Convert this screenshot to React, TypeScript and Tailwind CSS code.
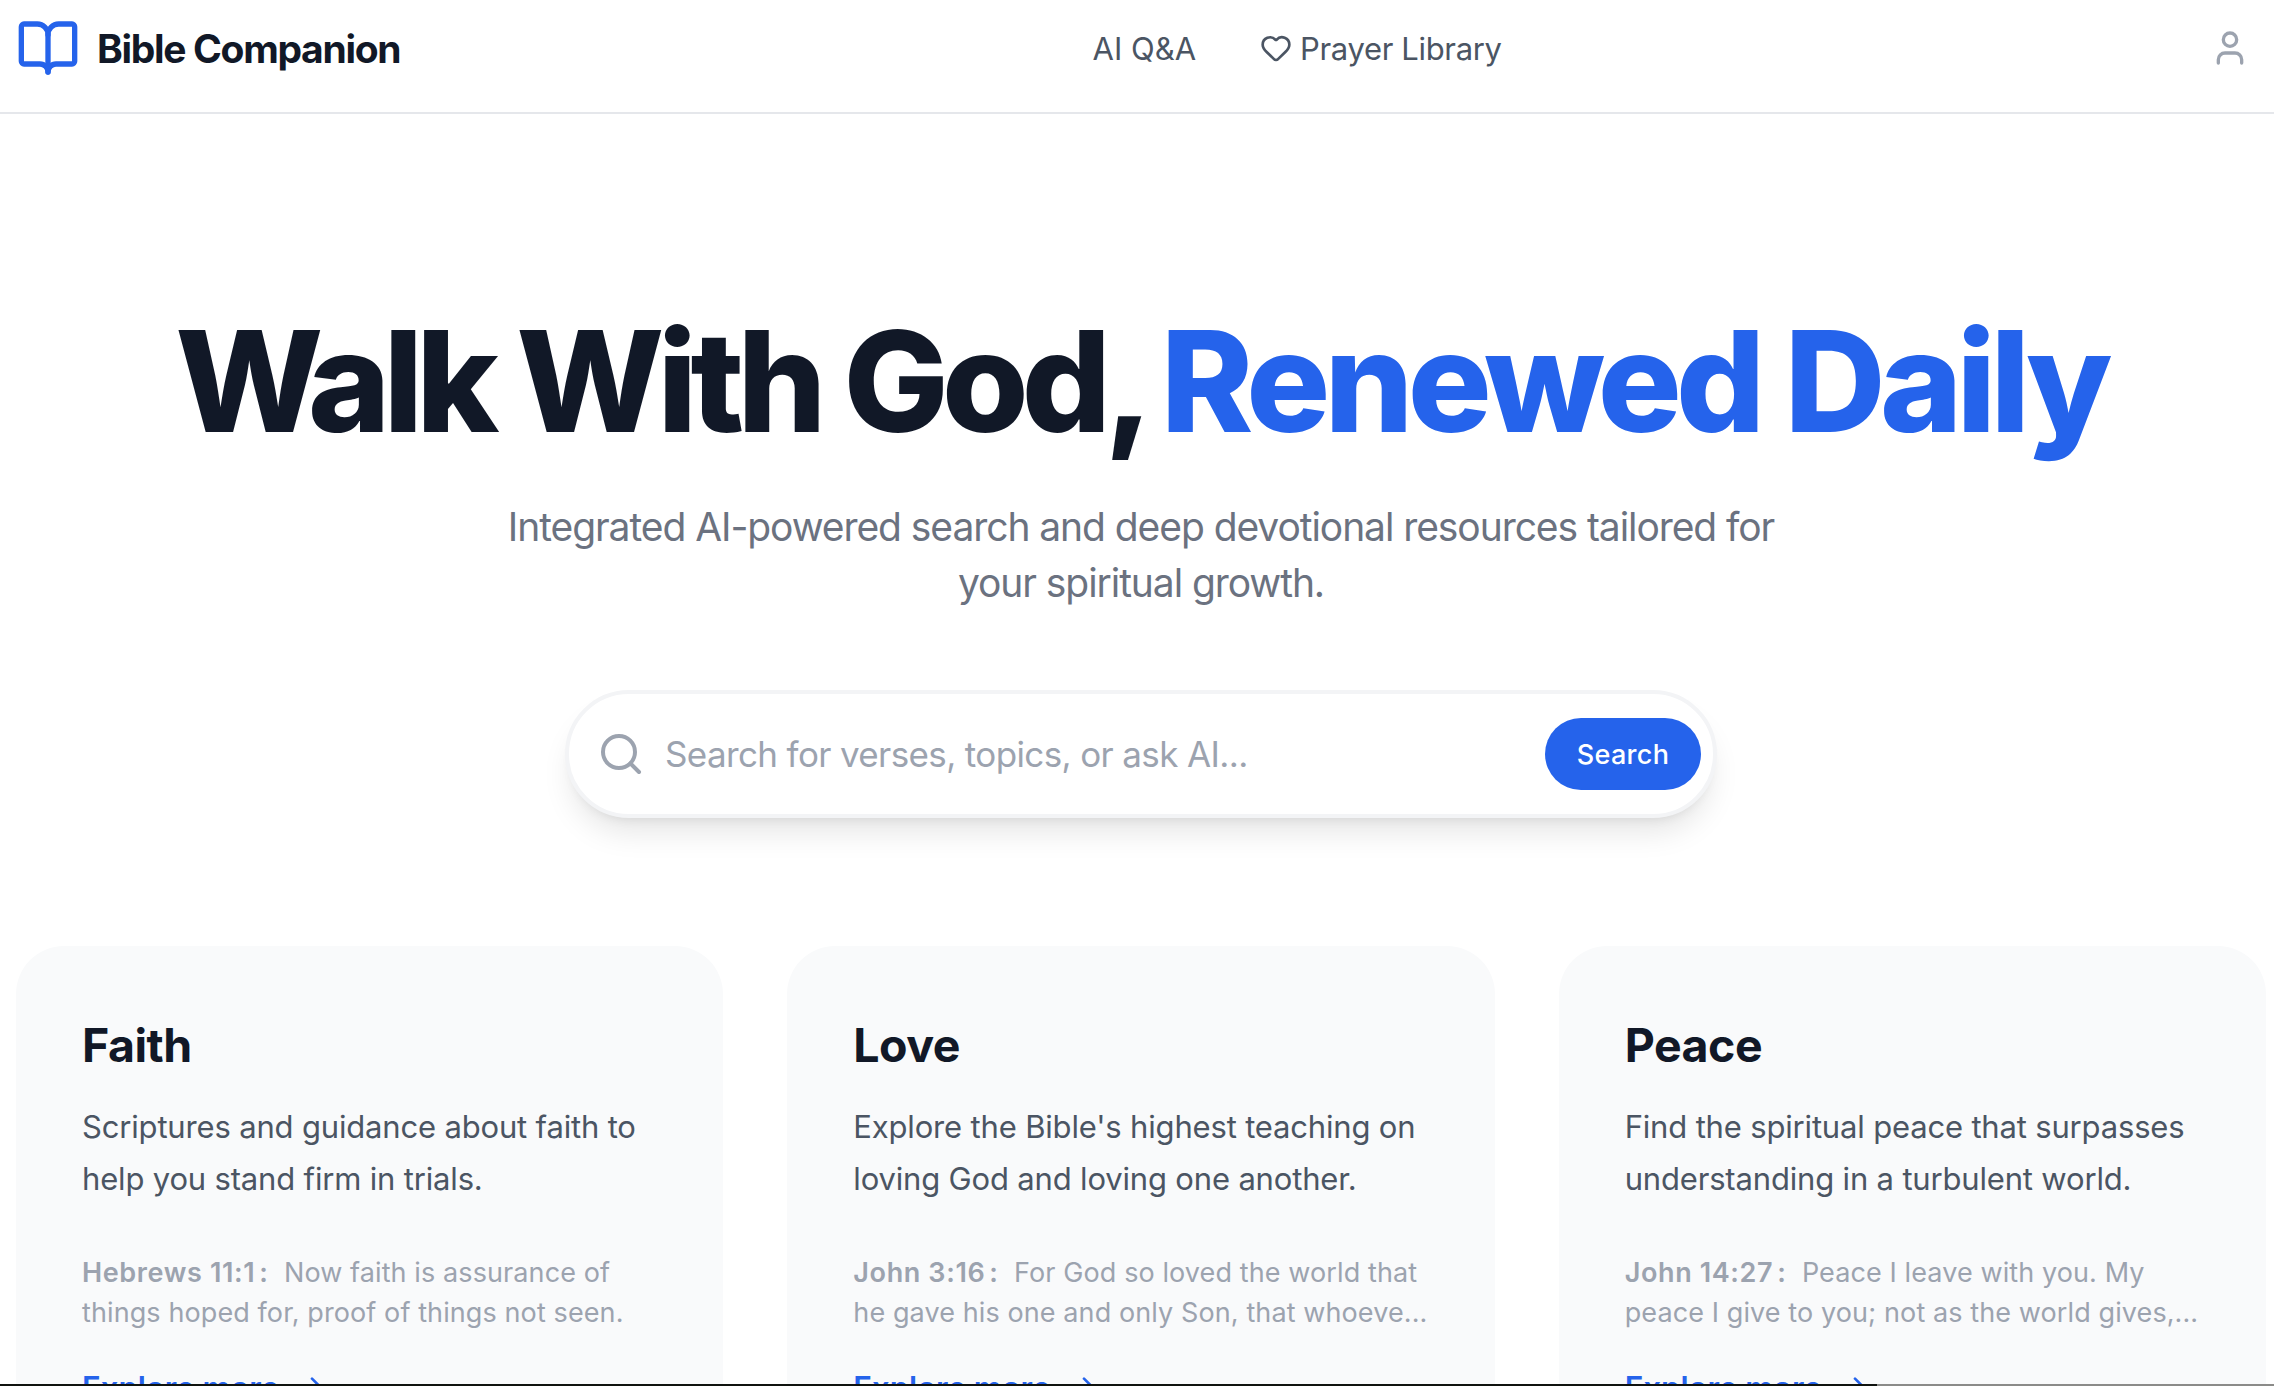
import { ArrowRight, BookOpen, Heart, Search, User } from 'lucide-react'

interface Topic {
  title: string
  description: string[]
  reference: string
  verse: string[]
}

const topics: Topic[] = [
  {
    title: 'Faith',
    description: ['Scriptures and guidance about faith to', 'help you stand firm in trials.'],
    reference: 'Hebrews 11:1',
    verse: ['Now faith is assurance of', 'things hoped for, proof of things not seen.'],
  },
  {
    title: 'Love',
    description: ["Explore the Bible's highest teaching on", 'loving God and loving one another.'],
    reference: 'John 3:16',
    verse: ['For God so loved the world that', 'he gave his one and only Son, that whoeve...'],
  },
  {
    title: 'Peace',
    description: ['Find the spiritual peace that surpasses', 'understanding in a turbulent world.'],
    reference: 'John 14:27',
    verse: ['Peace I leave with you. My', 'peace I give to you; not as the world gives,...'],
  },
]

const Header = () => (
  <header className="flex h-[114px] shrink-0 items-center justify-between border-b-2 border-[#e5e7eb] pr-2 pb-4 pl-4">
    <a href="#" className="flex items-center gap-[17px]">
      <BookOpen className="size-16 text-[#2563eb]" />
      <span className="pt-[3px] text-[39px] font-bold tracking-[-1.32px] text-[#111827]">Bible Companion</span>
    </a>
    <nav className="flex items-center gap-16 text-[31px] text-[#4b5563]">
      <a href="#" className="pt-[2px]">AI Q&amp;A</a>
      <a href="#" className="flex items-center gap-2 tracking-[-0.34px]">
        <Heart className="size-8" />
        <span className="pt-[2px]">Prayer Library</span>
      </a>
    </nav>
    <button className="p-4 text-[#9ca3af]">
      <User className="size-10" />
    </button>
  </header>
)

const SearchBar = () => (
  <div className="mx-auto mt-[79px] flex h-32 w-[1152px] items-center rounded-full border-4 border-[#f3f4f6] bg-white pr-3 pl-7 shadow-[0_20px_30px_-6px_rgba(0,0,0,0.1),0_8px_12px_-8px_rgba(0,0,0,0.1)]">
    <Search className="size-12 shrink-0 text-[#9ca3af]" />
    <input
      type="text"
      placeholder="Search for verses, topics, or ask AI..."
      className="ml-5 min-w-0 flex-1 bg-transparent text-[35px] tracking-[-0.63px] text-[#111827] outline-none placeholder:text-[#9ca3af]"
    />
    <button className="h-[72px] w-[156px] rounded-full bg-[#2563eb] pt-[2px] text-[27px] font-medium tracking-[0.3px] text-white">
      Search
    </button>
  </div>
)

const TopicCard = ({ title, description, reference, verse }: Topic) => (
  <article className="rounded-[48px] border-2 border-transparent bg-[#f9fafb] bg-origin-border p-16 pt-[65px]">
    <h3 className="text-[46.5px] leading-[64px] font-bold tracking-[-0.5px] text-[#111827]">{title}</h3>
    <p className="mt-6 text-[31px] leading-[52px] tracking-[-0.17px] whitespace-nowrap text-[#4b5563]">
      {description[0]}
      <br />
      {description[1]}
    </p>
    <p className="mt-12 text-[27px] leading-10 tracking-[0.1px] whitespace-nowrap text-[#9ca3af]">
      <span className="font-semibold tracking-[0.62px]">{reference}</span>
      <span className="mr-4 ml-1 font-semibold">:</span>
      {verse[0]}
      <br />
      {verse[1]}
    </p>
    <a
      href="#"
      className="mt-[31px] flex items-center gap-[17px] text-[31px] leading-[48px] font-semibold text-[#2563eb]"
    >
      Explore more
      <ArrowRight className="size-8" />
    </a>
  </article>
)

export default function App() {
  return (
    <div className="flex h-[1386px] flex-col overflow-hidden bg-white font-['Inter',sans-serif]">
      <Header />
      <main className="min-h-0 flex-1 overflow-hidden pr-2 pl-4">
        <section className="pt-[195px] text-center">
          <h1 className="flex justify-center gap-[14px] text-[140px] leading-[144px] font-extrabold whitespace-nowrap">
            <span className="tracking-[-6.85px] text-[#111827]">Walk With God,</span>
            <span className="tracking-[-5.75px] text-[#2563eb]">Renewed Daily</span>
          </h1>
          <p className="mt-[46px] text-[39px] leading-[56px] tracking-[-1.07px] text-[#6b7280]">
            Integrated AI-powered search and deep devotional resources tailored for
            <br />
            your spiritual growth.
          </p>
          <SearchBar />
        </section>
        <section className="mt-32 grid grid-cols-3 gap-16">
          {topics.map((topic) => (
            <TopicCard key={topic.title} {...topic} />
          ))}
        </section>
      </main>
      {/* Thin dark edge along the bottom of the window */}
      <div className="flex h-[2px] shrink-0">
        <div className="w-[1877px] bg-[#10130f]" />
        <div className="flex-1 bg-[#8b8b89]" />
      </div>
    </div>
  )
}
